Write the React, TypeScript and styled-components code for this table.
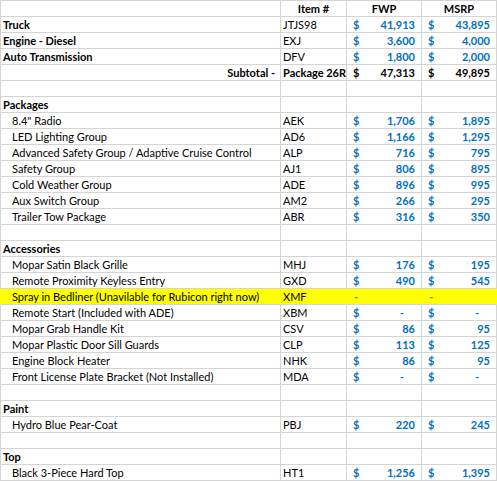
import React from "react";
import styled, { createGlobalStyle, css } from "styled-components";

const Global = createGlobalStyle`
  html, body { margin: 0; padding: 0; background: #ffffff; }
  body { font-family: Lato, "Liberation Sans", sans-serif; }
`;

const GRID = "#d4d4d4";
const BLUE = "#0070c0";
const YELLOW = "#ffff00";

const Sheet = styled.div`
  width: 497px;
  border-top: 1px solid ${GRID};
  font-family: Lato, "Liberation Sans", sans-serif;
  font-size: 11px;
  color: #000;
`;

const Row = styled.div<{ $hl?: boolean }>`
  display: grid;
  grid-template-columns: 281px 66px 75px 75px;
  height: 16px;
  background: ${(p) => (p.$hl ? YELLOW : "transparent")};
`;

const Cell = styled.div<{ $hl?: boolean; $first?: boolean }>`
  box-sizing: border-box;
  height: 16px;
  border-bottom: 1px solid ${GRID};
  border-right: 1px solid ${(p) => (p.$hl ? YELLOW : GRID)};
  ${(p) =>
    p.$first &&
    css`
      border-left: 1px solid ${p.$hl ? YELLOW : GRID};
    `}
  display: flex;
  align-items: flex-end;
  padding-bottom: 1px;
  line-height: 13px;
  white-space: nowrap;
  overflow: visible;
`;

const Label = styled(Cell)<{ $bold?: boolean; $indent?: boolean; $right?: boolean }>`
  font-weight: ${(p) => (p.$bold ? 700 : 400)};
  padding-left: ${(p) => (p.$indent ? 11 : 2)}px;
  justify-content: ${(p) => (p.$right ? "flex-end" : "flex-start")};
  padding-right: 5px;
`;

const Code = styled(Cell)<{ $bold?: boolean }>`
  padding-left: 2px;
  font-weight: ${(p) => (p.$bold ? 700 : 400)};
`;

const Head = styled(Cell)`
  justify-content: center;
  font-weight: 700;
`;

const Money = styled(Cell)<{ $black?: boolean; $dash?: boolean }>`
  justify-content: space-between;
  padding-left: 6px;
  padding-right: ${(p) => (p.$dash ? 17 : 6)}px;
  font-weight: 700;
  color: ${(p) => (p.$black ? "#000" : BLUE)};
`;

const Pending = styled(Cell)`
  padding-left: 7px;
  color: #3d8fd0;
  font-weight: 700;
`;

type Item = {
  kind: "item";
  label: string;
  code: string;
  fwp: string | null;
  msrp: string | null;
  bold?: boolean;
  indent?: boolean;
  hl?: boolean;
};

type RowData =
  | { kind: "header" }
  | { kind: "blank" }
  | { kind: "section"; label: string }
  | { kind: "subtotal"; fwp: string; msrp: string }
  | Item;

const it = (label: string, code: string, fwp: string | null, msrp: string | null, extra: Partial<Item> = {}): Item => ({
  kind: "item",
  label,
  code,
  fwp,
  msrp,
  indent: true,
  ...extra,
});

const rows: RowData[] = [
  { kind: "header" },
  it("Truck", "JTJS98", "41,913", "43,895", { bold: true, indent: false }),
  it("Engine - Diesel", "EXJ", "3,600", "4,000", { bold: true, indent: false }),
  it("Auto Transmission", "DFV", "1,800", "2,000", { bold: true, indent: false }),
  { kind: "subtotal", fwp: "47,313", msrp: "49,895" },
  { kind: "blank" },
  { kind: "section", label: "Packages" },
  it('8.4" Radio', "AEK", "1,706", "1,895"),
  it("LED Lighting Group", "AD6", "1,166", "1,295"),
  it("Advanced Safety Group / Adaptive Cruise Control", "ALP", "716", "795"),
  it("Safety Group", "AJ1", "806", "895"),
  it("Cold Weather Group", "ADE", "896", "995"),
  it("Aux Switch Group", "AM2", "266", "295"),
  it("Trailer Tow Package", "ABR", "316", "350"),
  { kind: "blank" },
  { kind: "section", label: "Accessories" },
  it("Mopar Satin Black Grille", "MHJ", "176", "195"),
  it("Remote Proximity Keyless Entry", "GXD", "490", "545"),
  it("Spray in Bedliner (Unavilable for Rubicon right now)", "XMF", null, null, { hl: true }),
  it("Remote Start (Included with ADE)", "XBM", "-", "-"),
  it("Mopar Grab Handle Kit", "CSV", "86", "95"),
  it("Mopar Plastic Door Sill Guards", "CLP", "113", "125"),
  it("Engine Block Heater", "NHK", "86", "95"),
  it("Front License Plate Bracket (Not Installed)", "MDA", "-", "-"),
  { kind: "blank" },
  { kind: "section", label: "Paint" },
  it("Hydro Blue Pear-Coat", "PBJ", "220", "245"),
  { kind: "blank" },
  { kind: "section", label: "Top" },
  it("Black 3-Piece Hard Top", "HT1", "1,256", "1,395"),
];

function Amount({ value, hl, black }: { value: string | null; hl?: boolean; black?: boolean }) {
  if (value === null) return <Pending $hl={hl}>-</Pending>;
  return (
    <Money $hl={hl} $black={black} $dash={value === "-"}>
      <span>$</span>
      <span>{value}</span>
    </Money>
  );
}

function SheetRow({ row }: { row: RowData }) {
  switch (row.kind) {
    case "header":
      return (
        <Row>
          <Cell $first />
          <Head>Item #</Head>
          <Head>FWP</Head>
          <Head>MSRP</Head>
        </Row>
      );
    case "blank":
      return (
        <Row>
          <Cell $first />
          <Cell />
          <Cell />
          <Cell />
        </Row>
      );
    case "section":
      return (
        <Row>
          <Label $first $bold>
            {row.label}
          </Label>
          <Cell />
          <Cell />
          <Cell />
        </Row>
      );
    case "subtotal":
      return (
        <Row>
          <Label $first $bold $right>
            Subtotal -
          </Label>
          <Code $bold>Package 26R</Code>
          <Amount value={row.fwp} black />
          <Amount value={row.msrp} black />
        </Row>
      );
    default:
      return (
        <Row $hl={row.hl}>
          <Label $first $hl={row.hl} $bold={row.bold} $indent={row.indent}>
            {row.label}
          </Label>
          <Code $hl={row.hl}>{row.code}</Code>
          <Amount value={row.fwp} hl={row.hl} />
          <Amount value={row.msrp} hl={row.hl} />
        </Row>
      );
  }
}

export default function App() {
  return (
    <>
      <Global />
      <Sheet>
        {rows.map((r, i) => (
          <SheetRow key={i} row={r} />
        ))}
      </Sheet>
    </>
  );
}
